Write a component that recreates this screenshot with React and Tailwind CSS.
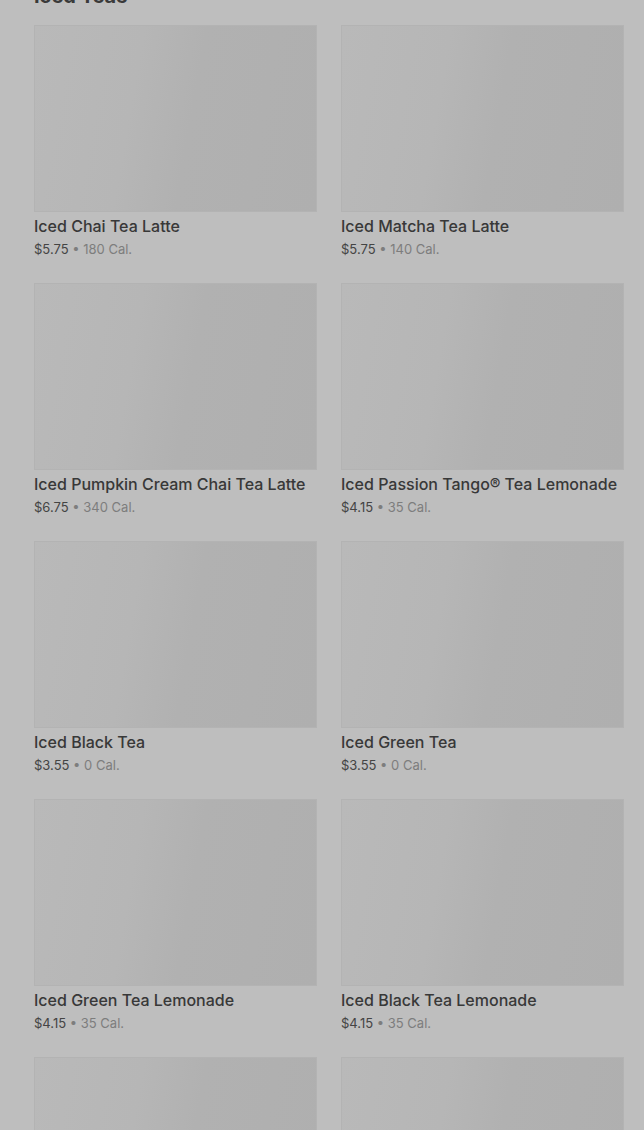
import React from "react";

const items = [
  ["Iced Chai Tea Latte", "$5.75", "180 Cal."],
  ["Iced Matcha Tea Latte", "$5.75", "140 Cal."],
  ["Iced Pumpkin Cream Chai Tea Latte", "$6.75", "340 Cal."],
  ["Iced Passion Tango® Tea Lemonade", "$4.15", "35 Cal."],
  ["Iced Black Tea", "$3.55", "0 Cal."],
  ["Iced Green Tea", "$3.55", "0 Cal."],
  ["Iced Green Tea Lemonade", "$4.15", "35 Cal."],
  ["Iced Black Tea Lemonade", "$4.15", "35 Cal."],
  ["", "", ""],
  ["", "", ""],
];

function Card({ name, price, cal }) {
  return (
    <div className="flex flex-col">
      <div className="h-[187px] border border-[#b3b3b3] bg-[linear-gradient(100deg,#b9b9b9_0%,#b6b6b6_35%,#b1b1b1_55%,#afafaf_100%)]" />
      {name && (
        <>
          <div className="mt-[2px] text-[16px] leading-6 font-medium text-[#383838] whitespace-nowrap">
            {name}
          </div>
          <div className="mt-[1px] text-[13px] leading-5 text-[#444]">
            {price}
            <span className="text-[#7d7d7d]"> • {cal}</span>
          </div>
        </>
      )}
    </div>
  );
}

export default function App() {
  return (
    <div
      className="h-[1130px] overflow-hidden bg-[#bebebe] pl-[34px] pr-[20px]"
      style={{ fontFamily: "Inter, 'Noto Sans', sans-serif" }}
    >
      <h2 className="-mt-[16px] text-[20px] leading-6 font-bold text-[#3a3a3a]">Iced Teas</h2>
      <div className="mt-[17px] grid grid-cols-2 gap-x-[24px] gap-y-[24px]">
        {items.map((it, i) => (
          <Card key={i} name={it[0]} price={it[1]} cal={it[2]} />
        ))}
      </div>
    </div>
  );
}
